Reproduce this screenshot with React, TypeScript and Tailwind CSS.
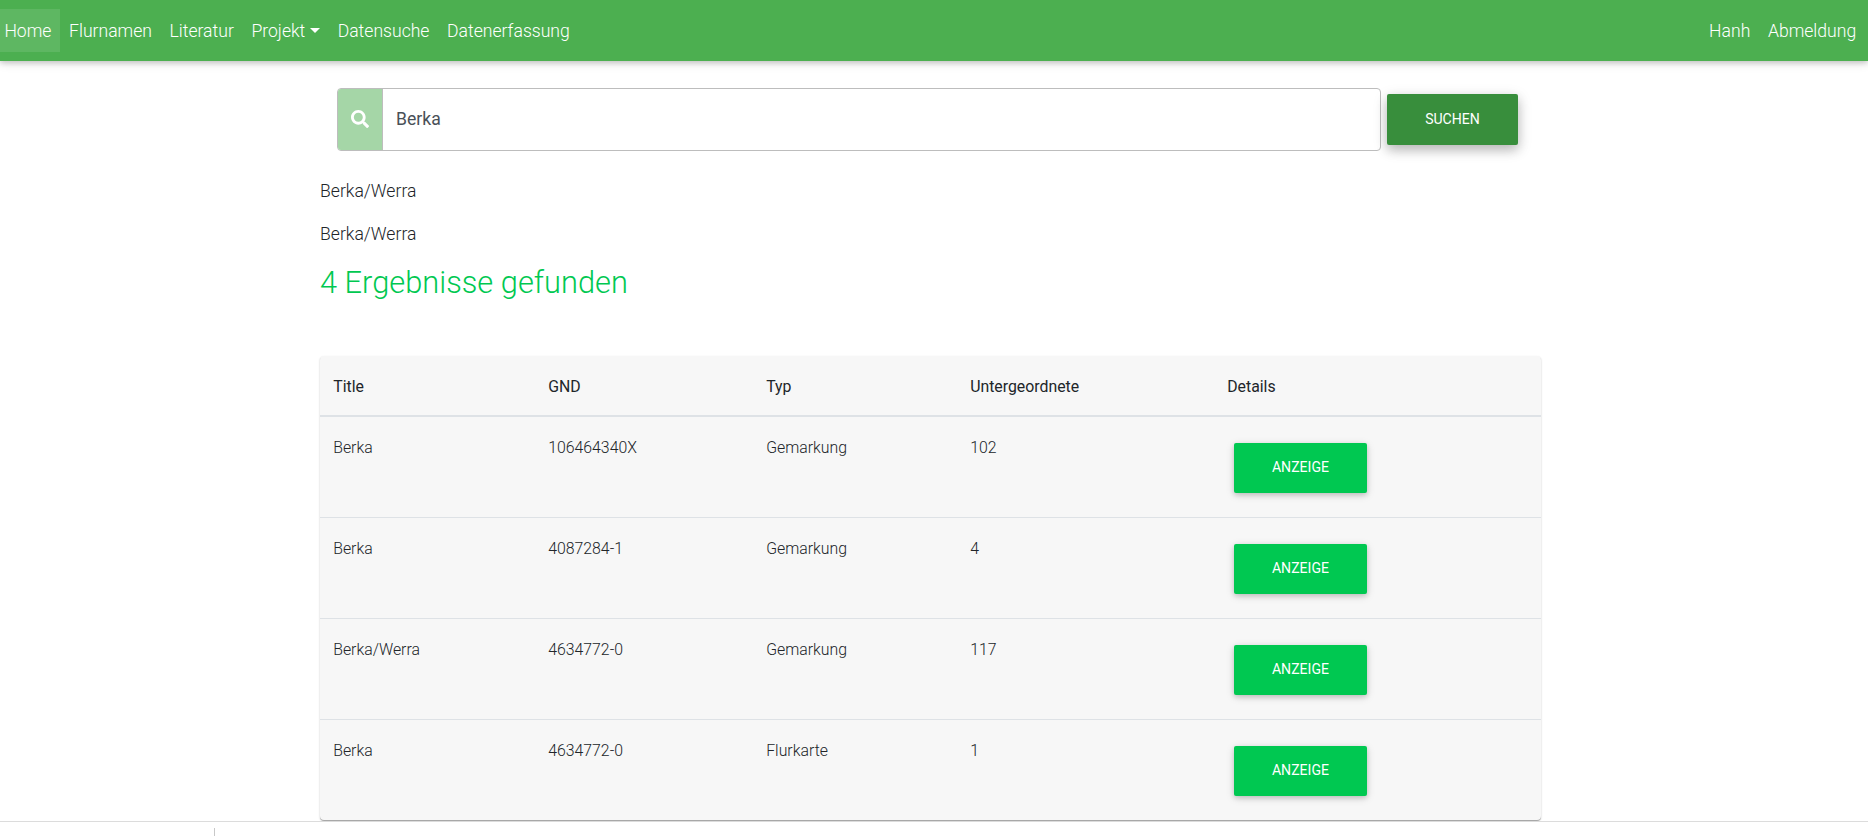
const leftLinks = ["Flurnamen", "Literatur"];
const rightLinks = ["Hanh", "Abmeldung"];

const rows = [
  { title: "Berka", gnd: "106464340X", type: "Gemarkung", children: "102" },
  { title: "Berka", gnd: "4087284-1", type: "Gemarkung", children: "4" },
  { title: "Berka/Werra", gnd: "4634772-0", type: "Gemarkung", children: "117" },
  { title: "Berka", gnd: "4634772-0", type: "Flurkarte", children: "1" },
];

function NavLink({ label }: { label: string }) {
  return (
    <a href="#" className="block px-[8.8px] pt-[9px] pb-[7px]">
      {label}
    </a>
  );
}

function Navbar() {
  return (
    <nav className="flex h-[61px] shrink-0 items-center justify-between bg-[#4caf50] pr-[3px] text-white shadow-[0_2px_5px_0_rgba(0,0,0,0.16),0_2px_10px_0_rgba(0,0,0,0.12)]">
      <div className="-ml-[4.4px] flex">
        <a href="#" className="block bg-white/10 px-[8.8px] pt-[9px] pb-[7px]">
          Home
        </a>
        {leftLinks.map((label) => (
          <NavLink key={label} label={label} />
        ))}
        <a href="#" className="flex items-center px-[8.8px] pt-[9px] pb-[7px]">
          Projekt
          <span className="mb-[3px] ml-[4.8px] border-x-[5px] border-t-[5px] border-x-transparent border-t-white" />
        </a>
        <NavLink label="Datensuche" />
        <NavLink label="Datenerfassung" />
      </div>
      <div className="flex">
        {rightLinks.map((label) => (
          <NavLink key={label} label={label} />
        ))}
      </div>
    </nav>
  );
}

function SearchBar() {
  return (
    <form className="ml-[17px] flex items-center" onSubmit={(e) => e.preventDefault()}>
      <div className="flex h-[63px] w-[1044px] rounded border border-[#bdbdbd]">
        <div className="flex w-11 items-center justify-center rounded-l-[3px] bg-[#a5d6a7] pb-px">
          <svg viewBox="0 0 512 512" className="h-[18px] w-[18px] fill-white">
            <path d="M505 442.7L405.3 343c-4.500-4.500-10.600-7-17-7H372c27.600-35.300 44-79.700 44-128C416 93.100 322.900 0 208 0S0 93.100 0 208s93.100 208 208 208c48.300 0 92.700-16.400 128-44v16.300c0 6.400 2.500 12.500 7 17l99.700 99.700c9.400 9.400 24.600 9.400 33.900 0l28.300-28.300c9.400-9.400 9.400-24.600.1-34zM208 336c-70.700 0-128-57.200-128-128 0-70.700 57.200-128 128-128 70.700 0 128 57.200 128 128 0 70.700-57.200 128-128 128z" />
          </svg>
        </div>
        <input
          defaultValue="Berka"
          className="min-w-0 flex-1 border-l border-[#bdbdbd] pr-3 pl-[13px] font-normal text-[#495057] outline-none"
        />
      </div>
      <button className="ml-1.5 h-[51px] w-[131px] rounded-[2px] bg-[#388e3c] text-[14.08px] font-normal text-white shadow-[0_5px_11px_0_rgba(0,0,0,0.18),0_4px_15px_0_rgba(0,0,0,0.15)]">
        SUCHEN
      </button>
    </form>
  );
}

function ResultsTable() {
  return (
    <div className="mt-[54px] mb-px w-[1221px] rounded bg-[#f7f7f7] text-[15.84px] shadow-[0_1px_0_0_rgba(0,0,0,0.2),0_1px_2px_0_rgba(0,0,0,0.24)]">
      <table className="w-full table-fixed border-separate border-spacing-0 text-left">
        <colgroup>
          <col className="w-[215px]" />
          <col className="w-[218px]" />
          <col className="w-[204px]" />
          <col className="w-[257px]" />
          <col />
        </colgroup>
        <thead>
          <tr className="h-[61px] text-[#212529]">
            {["Title", "GND", "Typ", "Untergeordnete", "Details"].map((h) => (
              <th key={h} className="border-b-2 border-[#dee2e6] px-[13.2px] pt-[2px] pb-0 font-normal">
                {h}
              </th>
            ))}
          </tr>
        </thead>
        <tbody className="text-[#212529] [&_td]:border-b [&_td]:border-[#dee2e6] [&_td]:px-[13.2px] [&_td]:pt-[17px] [&_td]:align-top [&_tr:last-child_td]:border-b-0">
          {rows.map((row, i) => (
            <tr key={i} className="h-[101px] last:h-[100px]">
              <td>{row.title}</td>
              <td>{row.gnd}</td>
              <td>{row.type}</td>
              <td>{row.children}</td>
              <td>
                <button className="mt-[9px] ml-[6.8px] block h-[50px] w-[133px] rounded-[2px] bg-[#00c851] pb-0.5 text-[14.08px] font-normal text-white shadow-[0_2px_5px_0_rgba(0,0,0,0.16),0_2px_10px_0_rgba(0,0,0,0.12)]">
                  ANZEIGE
                </button>
              </td>
            </tr>
          ))}
        </tbody>
      </table>
    </div>
  );
}

export default function App() {
  return (
    <div className="flex h-[836px] flex-col overflow-hidden bg-white font-['Roboto',sans-serif] text-[17.6px] leading-[27px] font-light text-[#212529]">
      <Navbar />
      <main className="mt-[27px] ml-[320px] w-[1228px] shrink-0">
        <SearchBar />
        <p className="mt-[27px]">Berka/Werra</p>
        <p className="mt-4">Berka/Werra</p>
        <h3 className="mt-4 text-[30.8px] leading-[38px] text-[#00c851]">4 Ergebnisse gefunden</h3>
        <ResultsTable />
      </main>
      <footer className="relative h-[15px] shrink-0 border-t border-[#dcdcdc] bg-white pt-1.5">
        <div className="ml-[214px] h-2 w-px bg-[#c8c8c8]" />
      </footer>
    </div>
  );
}
